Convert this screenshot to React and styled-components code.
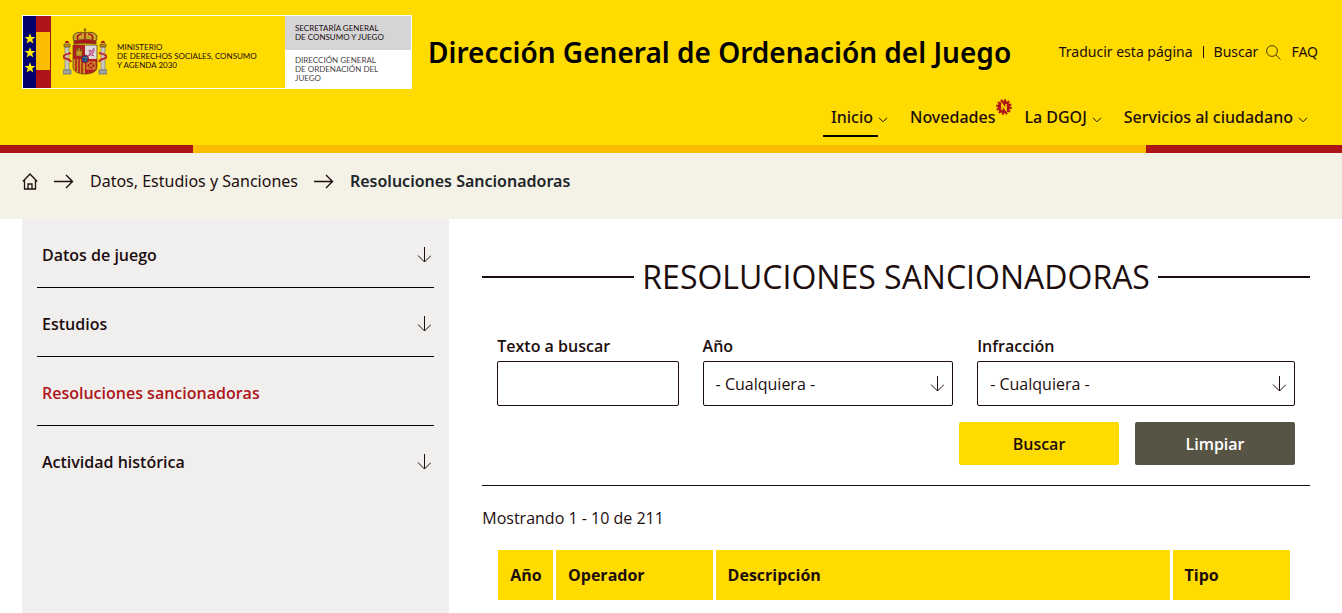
import { useState } from "react";
import styled, { createGlobalStyle } from "styled-components";

const menu = [
  { label: "Inicio", arrow: true, active: true },
  { label: "Novedades", isNew: true },
  { label: "La DGOJ", arrow: true },
  { label: "Servicios al ciudadano", arrow: true },
];

const sections = [
  { label: "Datos de juego", arrow: true },
  { label: "Estudios", arrow: true },
  { label: "Resoluciones sancionadoras", active: true },
  { label: "Actividad histórica", arrow: true },
];

const columns = [
  { label: "Año", width: "7%" },
  { label: "Operador", width: "20%" },
  { label: "Descripción", width: "58%" },
  { label: "Tipo" },
];

const stars = [
  [6, 23],
  [6, 37],
  [6, 52],
];

function ArrowDown() {
  return (
    <svg width="14" height="16" viewBox="0 0 14 16" fill="none" stroke="#1d0d0d" aria-hidden="true">
      <path d="M7.5 0v15" />
      <path d="M1 8.500 7.500 15 14 8.500" />
    </svg>
  );
}

function ArrowRight() {
  return (
    <svg width="20" height="15" viewBox="0 0 20 15" fill="none" stroke="#1d0d0d" strokeWidth="1.400" aria-hidden="true">
      <path d="M0 7.500h19M12 1l6.500 6.500L12 14" />
    </svg>
  );
}

function Chevron() {
  return (
    <svg width="10" height="6" viewBox="0 0 10 6" fill="none" stroke="#1d0d0d" aria-hidden="true">
      <path d="m1 .8 4 4 4-4" />
    </svg>
  );
}

function HomeIcon() {
  return (
    <svg width="16" height="17" viewBox="0 0 16 17" fill="none" stroke="#1d0d0d" strokeWidth="1.300" aria-hidden="true">
      <path d="M.8 8.500 8 1l7.200 7.500M2.500 7v9h11V7M6 16v-5h4v5" />
    </svg>
  );
}

function SearchIcon() {
  return (
    <svg width="15" height="15" viewBox="0 0 15 15" fill="none" stroke="#4d3b0a" aria-hidden="true">
      <circle cx="6" cy="6" r="5.400" />
      <path d="m10 10 4.500 4.500" />
    </svg>
  );
}

function Flag() {
  return (
    <svg width="28" height="72" viewBox="0 0 28 72" aria-hidden="true">
      <path fill="#03006d" d="M0 0h13v72H0z" />
      <path fill="#ad1519" d="M13 0h15v72H13z" />
      <path fill="#fabd00" d="M13 16h14v38H13z" />
      {stars.map(([x, y]) => (
        <path
          key={y}
          transform={`translate(${x + 1} ${y})`}
          fill="#ffee00"
          d="M0-5.800 1.400-1.900 5.500-1.900 2.200.6 3.400 4.600 0 2.200-3.400 4.600-2.200.6-5.500-1.900-1.400-1.900z"
        />
      ))}
    </svg>
  );
}

function CoatOfArms() {
  return (
    <svg width="44" height="48" viewBox="0 0 44 48" aria-hidden="true">
      {/* crown */}
      <path d="M22 0v5M20.500 2h3" stroke="#7a5a1c" strokeWidth="1.200" />
      <path d="M11 13C7 5 16 3 22 5c6-2 15 0 11 8z" fill="#c9a227" stroke="#6b4a1c" />
      <path d="M15 12c-2-4 1-6 4-6M29 12c2-4-1-6-4-6M22 5v7" fill="none" stroke="#ad1519" strokeWidth="1.500" />
      <path d="M11 13c7-2 15-2 22 0v3c-7-1-15-1-22 0z" fill="#ad1519" stroke="#6b4a1c" strokeWidth=".8" />
      {/* columns */}
      <path d="M2 19h4v23H2zM38 19h4v23h-4z" fill="#c9c9c0" stroke="#81817a" strokeWidth=".7" />
      <path d="M1 16h6v3H1zM37 16h6v3h-6z" fill="#b78a1d" stroke="#6b4a1c" strokeWidth=".7" />
      <path d="M2 15c0-3 4-3 4 0zM38 15c0-3 4-3 4 0z" fill="#ad1519" />
      <path d="M0 42h8v4H0zM36 42h8v4h-8z" fill="#a5a593" stroke="#48669a" strokeWidth=".7" />
      <path d="M8 25c-3 1-7 1-8 4 3 3 7 1 8 5M36 25c3 1 7 1 8 4-3 3-7 1-8 5" fill="none" stroke="#bd2b2d" strokeWidth="2" />
      {/* shield */}
      <path d="M10 17h12v15H10z" fill="#b61c20" />
      <path d="M22 17h12v15H22z" fill="#ddd8da" />
      <path d="M10 31h12v15c-6 0-12-2-12-7z" fill="#c79720" />
      <path d="M22 31h12v8c0 5-6 7-12 7z" fill="#b61c20" />
      <path d="M13 31v12M16 31v14M19 31v15" stroke="#b61c20" strokeWidth="1.600" />
      <path d="M13 28v-7h1v2h1v-3h2v3h1v-2h1v7z" fill="#c99b24" stroke="#6b4a1c" strokeWidth=".6" />
      <path d="m25 28 2-3-1-3 3 1 2-3v4l-2 2 2 2-3-1z" fill="#d57bb0" stroke="#a94679" strokeWidth=".7" />
      <path d="M24 34h8v7h-8zM24 34l8 7M32 34l-8 7" fill="none" stroke="#d2a62e" />
      <path d="M10 17h24v22c0 5-6 7-12 7s-12-2-12-7z" fill="none" stroke="#70451f" strokeWidth=".8" />
      <ellipse cx="22" cy="31" rx="3.500" ry="4" fill="#164a8e" stroke="#ad1519" />
      <path d="M20.500 29.500h1M23 29.500h1M22 32h1" stroke="#d2b02e" />
    </svg>
  );
}

function NewBadge() {
  return (
    <StBadge>
      <svg width="16" height="16" viewBox="-8 -8 16 16" role="img" aria-label="Nuevo">
        <circle r="6.200" fill="#ad1519" />
        <circle r="6.600" fill="none" stroke="#ad1519" strokeWidth="2.400" strokeDasharray="2 1.450" />
        <path d="M-2 3v-6l4 6v-6" fill="none" stroke="#ffdb00" strokeWidth="1.500" />
      </svg>
    </StBadge>
  );
}

function SelectField({ id, label, grow }) {
  return (
    <StField $grow={grow}>
      <StLabel htmlFor={id}>{label}</StLabel>
      <StSelectBox>
        <StSelect id={id}>
          <option>- Cualquiera -</option>
        </StSelect>
        <StSelectArrow>
          <ArrowDown />
        </StSelectArrow>
      </StSelectBox>
    </StField>
  );
}

function App() {
  const [text, setText] = useState("");

  return (
    <>
      <GlobalStyle />
      <StHeader>
        <StHeaderTop>
          <StLogo href="#">
            <Flag />
            <StMinistry>
              <CoatOfArms />
              <StLogoText>
                MINISTERIO
                <br />
                DE DERECHOS SOCIALES, CONSUMO
                <br />Y AGENDA 2030
              </StLogoText>
            </StMinistry>
            <StOffices>
              <StSecretary>
                SECRETARÍA GENERAL
                <br />
                DE CONSUMO Y JUEGO
              </StSecretary>
              <StDirection>
                DIRECCIÓN GENERAL
                <br />
                DE ORDENACIÓN DEL
                <br />
                JUEGO
              </StDirection>
            </StOffices>
          </StLogo>
          <StSiteTitle>Dirección General de Ordenación del Juego</StSiteTitle>
          <StTools>
            <StToolLink href="#">Traducir esta página</StToolLink>
            <StDivider />
            <StToolLink href="#">
              Buscar
              <SearchIcon />
            </StToolLink>
            <StToolLink href="#">FAQ</StToolLink>
          </StTools>
        </StHeaderTop>
        <StNav>
          {menu.map(({ label, arrow, active, isNew }) => (
            <StNavItem key={label} $isNew={isNew}>
              <StNavLink href="#" $active={active}>
                {label}
              </StNavLink>
              {arrow && <Chevron />}
              {isNew && <NewBadge />}
            </StNavItem>
          ))}
        </StNav>
        <StStripe />
      </StHeader>

      <StBreadcrumb aria-label="Ruta">
        <StCrumb href="#" aria-label="Inicio">
          <HomeIcon />
        </StCrumb>
        <ArrowRight />
        <StCrumb href="#">Datos, Estudios y Sanciones</StCrumb>
        <ArrowRight />
        <StCurrent>Resoluciones Sancionadoras</StCurrent>
      </StBreadcrumb>

      <StPage>
        <StSidebar>
          {sections.map(({ label, arrow, active }) => (
            <StSection key={label}>
              <StSectionLink href="#" $active={active}>
                {label}
                {arrow && <ArrowDown />}
              </StSectionLink>
            </StSection>
          ))}
        </StSidebar>

        <StMain>
          <StHeading>Resoluciones sancionadoras</StHeading>
          <StForm onSubmit={(event) => event.preventDefault()}>
            <StFields>
              <StField $grow={186}>
                <StLabel htmlFor="texto">Texto a buscar</StLabel>
                <StInput id="texto" value={text} onChange={(event) => setText(event.target.value)} />
              </StField>
              <SelectField id="anio" label="Año" grow={257} />
              <SelectField id="infraccion" label="Infracción" grow={326} />
            </StFields>
            <StActions>
              <StButton type="submit">Buscar</StButton>
              <StButton type="button" $dark onClick={() => setText("")}>
                Limpiar
              </StButton>
            </StActions>
          </StForm>
          <StSummary>Mostrando 1 - 10 de 211</StSummary>
          <StTable>
            <thead>
              <tr>
                {columns.map(({ label, width }) => (
                  <StTh key={label} $width={width}>
                    {label}
                  </StTh>
                ))}
              </tr>
            </thead>
          </StTable>
        </StMain>
      </StPage>
    </>
  );
}

export default App;

// styled-components
const GlobalStyle = createGlobalStyle`
  * {
    box-sizing: border-box;
  }

  html,
  body,
  #root {
    height: 100%;
  }

  body {
    margin: 0;
    overflow: hidden;
    color: #1d0d0d;
    background: #fff;
    font-family: "Noto Sans", sans-serif;
    font-size: 16px;
  }

  #root {
    display: flex;
    flex-direction: column;
  }

  a {
    color: inherit;
    text-decoration: none;
  }

  svg {
    display: block;
    flex-shrink: 0;
  }
`;

const StHeader = styled.header`
  background: #ffdb00;
`;

const StHeaderTop = styled.div`
  display: flex;
  align-items: center;
  padding: 15px 24px 0 22px;
`;

const StLogo = styled.a`
  display: flex;
  flex-shrink: 0;
  border: 1px solid #fff;
  font-family: Lato, sans-serif;
  font-size: 8px;
  line-height: 9px;
`;

const StMinistry = styled.span`
  display: flex;
  align-items: center;
  gap: 10px;
  width: 234px;
  padding-left: 12px;
`;

const StLogoText = styled.span`
  padding-top: 8px;
  white-space: nowrap;
`;

const StOffices = styled.span`
  display: flex;
  flex-direction: column;
  width: 126px;
`;

const StSecretary = styled.span`
  padding: 8px 0 8px 10px;
  background: #d5d5d7;
`;

const StDirection = styled.span`
  flex: 1;
  padding: 6px 0 0 10px;
  color: #4a4548;
  background: #fff;
`;

const StSiteTitle = styled.h1`
  margin: 0 0 0 16px;
  color: #000;
  font-size: 28px;
  font-weight: 600;
  line-height: 40px;
  white-space: nowrap;
`;

const StTools = styled.div`
  display: flex;
  align-items: center;
  gap: 10px;
  margin-left: auto;
  font-size: 14px;
  line-height: 20px;
`;

const StToolLink = styled.a`
  display: flex;
  align-items: center;
  gap: 8px;
`;

const StDivider = styled.span`
  width: 1px;
  height: 12px;
  background: #1d0d0d;
`;

const StNav = styled.nav`
  display: flex;
  justify-content: flex-end;
  gap: 22px;
  padding: 13px 34px 8px 0;
`;

const StNavItem = styled.div`
  position: relative;
  display: flex;
  align-items: center;
  margin-right: ${(props) => (props.$isNew ? "2px" : "0")};
`;

const StNavLink = styled.a`
  padding: 3px 0 6px;
  border-bottom: 2px solid ${(props) => (props.$active ? "#000" : "transparent")};
  padding-left: ${(props) => (props.$active ? "8px" : "0")};
  padding-right: 5px;
  font-weight: 500;
  line-height: 24px;
`;

const StBadge = styled.span`
  position: absolute;
  top: -3px;
  right: -12px;
`;

const StStripe = styled.div`
  height: 8px;
  background: linear-gradient(
    90deg,
    #ad1519 193px,
    #fabd00 193px,
    #fabd00 calc(100% - 196px),
    #ad1519 calc(100% - 196px)
  );
`;

const StBreadcrumb = styled.nav`
  display: flex;
  align-items: center;
  gap: 16px;
  padding: 16px 22px 26px;
  background: #f4f2e6;
  line-height: 24px;
`;

const StCrumb = styled.a``;

const StCurrent = styled.strong`
  color: #212529;
  font-weight: 600;
`;

const StPage = styled.div`
  display: flex;
  flex: 1;
  gap: 33px;
  padding: 0 32px 0 22px;
  font-family: "Open Sans", sans-serif;
`;

const StSidebar = styled.aside`
  flex: 407 1 0;
  padding: 0 15px;
  background: #f1efee;
`;

const StSection = styled.div`
  border-bottom: 1px solid #000;

  &:last-child {
    border-bottom: none;
  }
`;

const StSectionLink = styled.a`
  display: flex;
  align-items: center;
  justify-content: space-between;
  padding: 24px 3px 20px 5px;
  color: ${(props) => (props.$active ? "#ad1519" : "inherit")};
  font-weight: 600;
  line-height: 24px;
`;

const StMain = styled.main`
  flex: 848 1 0;
`;

const StHeading = styled.h2`
  display: flex;
  align-items: center;
  gap: 8px;
  margin: 36px 0 0;
  font-size: 32px;
  font-weight: 400;
  line-height: 44px;
  text-transform: uppercase;
  white-space: nowrap;

  &::before,
  &::after {
    content: "";
    flex: 1;
    height: 2px;
    background: #1d0d0d;
  }
`;

const StForm = styled.form`
  padding: 35px 15px 20px;
  border-bottom: 1px solid #1d0d0d;
`;

const StFields = styled.div`
  display: flex;
  gap: 24px;
`;

const StField = styled.div`
  display: flex;
  flex: ${(props) => props.$grow} 1 0;
  flex-direction: column;
  gap: 3px;
  min-width: 0;
`;

const StLabel = styled.label`
  font-weight: 600;
  line-height: 24px;
`;

const StInput = styled.input`
  width: 100%;
  height: 45px;
  padding: 0 12px;
  border: 1px solid #1d0d0d;
  border-radius: 2px;
  background: #fff;
  font: inherit;
`;

const StSelectBox = styled.div`
  position: relative;
`;

const StSelect = styled.select`
  width: 100%;
  height: 45px;
  padding: 0 32px 0 12px;
  border: 1px solid #1d0d0d;
  border-radius: 2px;
  color: inherit;
  background: #fff;
  font: inherit;
  appearance: none;
`;

const StSelectArrow = styled.span`
  position: absolute;
  top: 15px;
  right: 9px;
  pointer-events: none;
`;

const StActions = styled.div`
  display: flex;
  justify-content: flex-end;
  gap: 16px;
  margin-top: 16px;
`;

const StButton = styled.button`
  width: 160px;
  height: 43px;
  padding: 0;
  border: none;
  border-radius: 2px;
  color: ${(props) => (props.$dark ? "#fff" : "#1d0d0d")};
  background: ${(props) => (props.$dark ? "#575445" : "#ffdb00")};
  font: inherit;
  font-weight: 600;
  cursor: pointer;
`;

const StSummary = styled.p`
  margin: 20px 0;
  line-height: 24px;
`;

const StTable = styled.table`
  width: calc(100% - 30px);
  margin-left: 13px;
  border-spacing: 3px 0;
  table-layout: fixed;
`;

const StTh = styled.th`
  width: ${(props) => props.$width || "auto"};
  height: 50px;
  padding: 0 12px;
  background: #ffdb00;
  font-weight: 700;
  text-align: left;
`;
